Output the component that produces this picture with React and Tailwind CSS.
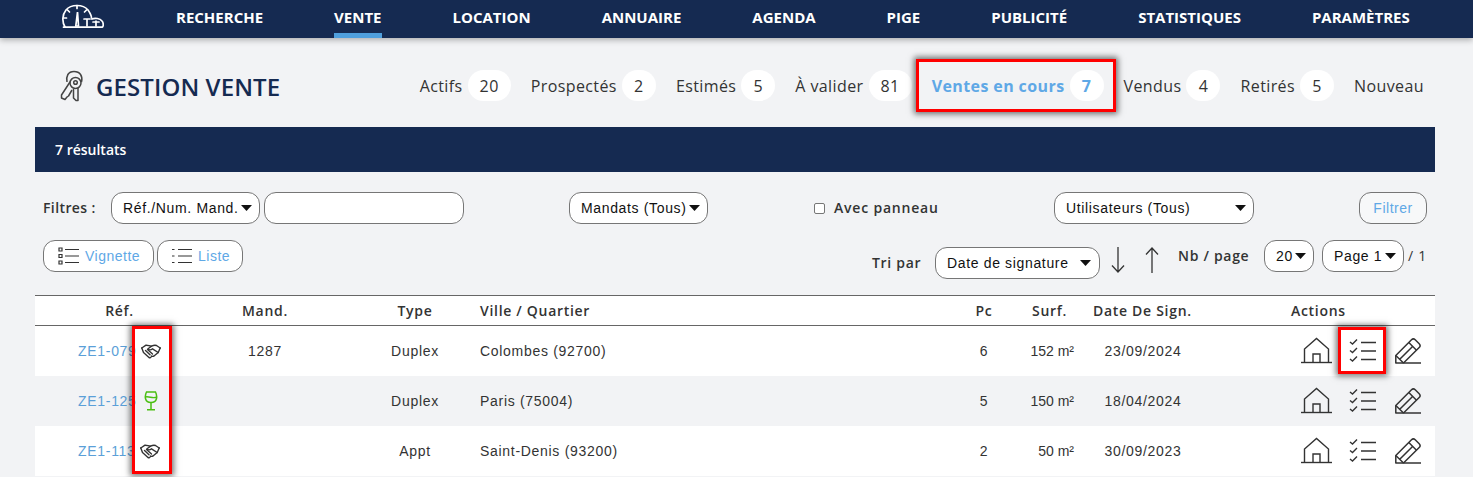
import React from "react";

const navItems = ["RECHERCHE", "VENTE", "LOCATION", "ANNUAIRE", "AGENDA", "PIGE", "PUBLICITÉ", "STATISTIQUES", "PARAMÈTRES"];

const tabs = [
  ["Actifs", "20"],
  ["Prospectés", "2"],
  ["Estimés", "5"],
  ["À valider", "81"],
  ["Ventes en cours", "7", true],
  ["Vendus", "4"],
  ["Retirés", "5"],
  ["Nouveau"],
];

const rows = [
  { ref: "ZE1-079", mand: "1287", type: "Duplex", city: "Colombes (92700)", pc: "6", surf: "152 m²", date: "23/09/2024", icon: "hand" },
  { ref: "ZE1-125", mand: "", type: "Duplex", city: "Paris (75004)", pc: "5", surf: "150 m²", date: "18/04/2024", icon: "wine", alt: true },
  { ref: "ZE1-113", mand: "", type: "Appt", city: "Saint-Denis (93200)", pc: "2", surf: "50 m²", date: "30/09/2023", icon: "hand" },
];

const Logo = () => (
  <svg width="42" height="24" viewBox="0 0 42 24" fill="none" stroke="#fff" strokeWidth="1.7" strokeLinecap="round">
    <path d="M3 23 C0 18 0 11 4 6 C9 0 21 0 26 6 C28 9 29.500 11 29.500 14" />
    <path d="M1.500 23.200 H40 C41.500 23.200 41.800 19 40 17 C38 14.500 33 13.500 30 15" />
    <path d="M15 1.500 V4.500 M5.500 6 L7.500 8 M24.500 6 L22.500 8 M1.500 14 H4.500 M15.500 8 L13.800 22 H16.500 Z" />
    <path d="M25 22 V16 M22 15 H28 M34 22 V17 M31 18 H37" />
  </svg>
);

const Keys = () => (
  <svg width="24" height="32" viewBox="0 0 24 32" fill="none" stroke="#444" strokeWidth="1.5" strokeLinejoin="round">
    <path d="M7 12 C6 6 8 1.500 14 1.500 C20 1.500 23 6 21.500 12" />
    <circle cx="15.500" cy="13" r="5.500" />
    <circle cx="15.500" cy="12.500" r="1.800" />
    <path d="M13.500 18.500 V28 L16 30.500 H18 V18" />
    <path d="M10 12 L1.500 25 V28 L5 29.500 L7 27 L8.500 26 L12 20" />
  </svg>
);

const House = () => (
  <svg width="31" height="28" viewBox="0 0 31 28" fill="none" stroke="#333" strokeWidth="1.4">
    <path d="M0 25.500 H31" />
    <path d="M3.500 25.500 V12 L15.500 1.500 L27.500 12 V25.500" />
    <path d="M12 25.500 V17 H19 V25.500" />
  </svg>
);

const Checks = () => (
  <svg width="27" height="26" viewBox="0 0 27 26" fill="none" stroke="#333" strokeWidth="1.4">
    <path d="M1 4 L3.500 6 L8 1.500 M1 12.500 L3.500 14.500 L8 10 M1 21 L3.500 23 L8 18.500" />
    <path d="M12 4.500 H27 M12 13 H27 M12 21.500 H27" />
  </svg>
);

const Pencil = () => (
  <svg width="26" height="26" viewBox="0 0 26 26" fill="none" stroke="#333" strokeWidth="1.5" strokeLinejoin="round">
    <path d="M0.800 25 V17.500 L16.500 1.800 C17.700 0.600 19 0.600 20.200 1.800 L24.200 5.800 C25.400 7 25.400 8.300 24.200 9.500 L8.500 25 Z" />
    <path d="M0.800 17.500 L8.500 25 M13.800 4.500 L21.500 12.200 M5 21 L17.800 8.200" />
    <path d="M8.500 25 H26" />
  </svg>
);

const Handshake = () => (
  <svg width="20" height="15" viewBox="0 0 20 15" fill="none" stroke="#333" strokeWidth="1.4" strokeLinecap="round" strokeLinejoin="round" className="shrink-0">
    <path d="M0.800 4 L5 1.200 C7 1 8.500 2.200 10.500 2.200 C12.500 1.200 14 1 15.500 1.500 L19.200 4" />
    <path d="M0.800 4 L2.500 8.500 L8 13.500 C9 14 10 13.500 10.500 12.500 M19.200 4 L17.200 8.500 L13 12 C12 12.500 11 12.500 10.500 12" />
    <path d="M10.500 2.200 L7 4.800 C8 6.500 10 6 11.500 4.800 L17.200 8.500" />
    <path d="M4.500 6.500 L9 10.800 M6.500 5.500 L11.500 10" />
  </svg>
);

const Wine = () => (
  <svg width="14" height="20" viewBox="0 0 14 20" fill="none" stroke="#4bbf12" strokeWidth="1.5">
    <path d="M2.500 1 H11.500 C13.500 5 13.500 11.500 7 11.500 C0.500 11.500 0.500 5 2.500 1 Z" />
    <path d="M1.500 6 C5 5 9 8 12.800 6" />
    <path d="M7 11.500 V18.500 M3 18.800 H11" />
  </svg>
);

const ListIcon = ({ boxes }) => (
  <svg width="21" height="18" viewBox="0 0 21 18" fill="none" stroke="#333" strokeWidth="1.2">
    {boxes ? (
      <path d="M1 1 H4 V4 H1 Z M1 7.500 H4 V10.500 H1 Z M1 14 H4 V17 H1 Z" />
    ) : (
      <path d="M1 2.500 H3.500 M1 9 H3.500 M1 15.500 H3.500" />
    )}
    <path d="M7 2.500 H21 M7 9 H21 M7 15.500 H21" />
  </svg>
);

const Caret = () => (
  <svg width="11" height="6" viewBox="0 0 11 6" className="shrink-0">
    <path d="M0 0 H11 L5.500 6 Z" fill="#111" />
  </svg>
);

const Arrow = ({ up }) => (
  <svg width="14" height="26" viewBox="0 0 14 26" fill="none" stroke="#333" strokeWidth="1.3" className={up ? "rotate-180" : ""}>
    <path d="M7 0 V25 M1 18.500 L7 25 L13 18.500" />
  </svg>
);

const Select = ({ label, className = "" }) => (
  <div className={`h-8 flex items-center justify-between rounded-xl border border-[#767676] bg-white font-['Liberation_Sans',sans-serif] text-[14px] text-[#111] tracking-[0.65px] whitespace-nowrap ${className}`}>
    <span>{label}</span>
    <Caret />
  </div>
);

const ViewButton = ({ label, boxes, className = "" }) => (
  <div className={`h-8 flex items-center gap-[6px] rounded-xl border border-[#767676] bg-white font-['Liberation_Sans',sans-serif] text-[14px] tracking-[0.5px] text-[#5fa8e6] ${className}`}>
    <ListIcon boxes={boxes} />
    {label}
  </div>
);

const RedBox = ({ className = "" }) => (
  <div className={`absolute border-[3px] border-[#ff0000] shadow-[0_0_6px_2px_rgba(0,0,0,0.55)] pointer-events-none ${className}`} />
);

const cols = "grid grid-cols-[169px_122px_154px_480px_48px_90px_90px_247px] items-center";

export default function App() {
  return (
    <div className="h-[477px] overflow-hidden bg-[#f2f3f5] font-['Open_Sans',sans-serif] text-[#333]">
      {/* top nav */}
      <header className="relative z-10 h-[38px] bg-[#152a51] shadow-[0_2px_6px_rgba(0,0,0,0.3)] flex">
        <div className="ml-[62px] mt-[4px] w-[114px] shrink-0">
          <Logo />
        </div>
        <nav className="flex gap-[71px]">
          {navItems.map((item) => (
            <div
              key={item}
              className={`h-[38px] pt-[7px] text-[15px] leading-[20px] font-bold text-white whitespace-nowrap ${item === "VENTE" ? "border-b-[5px] border-[#4f9fdc]" : ""}`}
            >
              {item}
            </div>
          ))}
        </nav>
      </header>

      {/* title + tabs */}
      <div className="h-[89px] flex items-center justify-between pt-[6px] pl-[60px] pr-[49px]">
        <div className="flex items-center gap-[12px]">
          <Keys />
          <h1 className="text-[24px] font-semibold tracking-[0.1px] text-[#152a51] pt-[3px] whitespace-nowrap">GESTION VENTE</h1>
        </div>
        <div className="flex items-center gap-[20px] text-[16px] tracking-[0.4px]">
          {tabs.map(([label, count, active]) => (
            <div key={label} className="relative flex items-center gap-[5px] whitespace-nowrap">
              <span className={active ? "font-bold text-[#5fa8e6]" : ""}>{label}</span>
              {count && (
                <span className={`h-[31px] min-w-[34px] px-3 flex items-center justify-center rounded-full bg-white ${active ? "font-bold text-[#5fa8e6]" : ""}`}>
                  {count}
                </span>
              )}
              {active && <RedBox className="-left-[16px] -right-[12px] -top-[11px] h-[53px]" />}
            </div>
          ))}
        </div>
      </div>

      <div className="ml-[35px] w-[1400px]">
        {/* result bar */}
        <div className="h-[45px] bg-[#152a51] flex items-center pl-[20px] text-[14px] font-semibold text-white">
          7 résultats
        </div>

        {/* filters */}
        <div className="flex items-center h-[32px] mt-[20px] pl-[8px]">
          <span className="w-[68px] mb-[2px] text-[14px] font-semibold tracking-[0.4px]">Filtres :</span>
          <Select label="Réf./Num. Mand." className="w-[149px] pl-[11px] pr-[7px]" />
          <div className="w-[200px] h-8 ml-1 rounded-xl border border-[#767676] bg-white" />
          <Select label="Mandats (Tous)" className="w-[139px] ml-[105px] pl-[11px] pr-[7px]" />
          <div className="w-[11px] h-[11px] ml-[106px] border border-[#767676] bg-white rounded-[2px]" />
          <span className="ml-[9px] mb-[2px] w-[105px] text-[14px] font-semibold tracking-[0.8px] whitespace-nowrap">Avec panneau</span>
          <Select label="Utilisateurs (Tous)" className="w-[200px] ml-[115px] pl-[11px] pr-[7px]" />
          <div className="w-[68px] h-8 ml-[105px] flex items-center justify-center rounded-xl border border-[#767676] bg-white/40 font-['Liberation_Sans',sans-serif] text-[14px] tracking-[0.5px] text-[#5fa8e6]">
            Filtrer
          </div>
        </div>

        <div className="flex items-start h-[55px] mt-[16px] pl-[8px]">
          <ViewButton label="Vignette" boxes className="w-[111px] pl-[14px]" />
          <ViewButton label="Liste" className="w-[86px] ml-[3px] pl-[13px]" />
          <span className="ml-[629px] mt-[12px] w-[48px] text-[14px] font-semibold tracking-[0.7px] whitespace-nowrap">Tri par</span>
          <Select label="Date de signature" className="w-[165px] ml-[15px] mt-[7px] pl-[11px] pr-[8px]" />
          <div className="ml-[11px] mt-[7px]"><Arrow /></div>
          <div className="ml-[20px] mt-[7px]"><Arrow up /></div>
          <span className="ml-[19px] mt-[5px] w-[72px] text-[14px] font-semibold tracking-[0.7px] whitespace-nowrap">Nb / page</span>
          <Select label="20" className="w-[50px] ml-[14px] pl-[11px] pr-[7px]" />
          <Select label="Page 1" className="w-[82px] ml-[8px] pl-[11px] pr-[7px]" />
          <span className="ml-[4px] mt-[5px] text-[14px] tracking-[0.7px] whitespace-nowrap">/ 1</span>
        </div>

        {/* table */}
        <div className="relative bg-white">
          <div className={`${cols} h-[31px] border-y border-[#666] text-[14px] font-semibold tracking-[0.7px]`}>
            <div className="text-center">Réf.</div>
            <div className="text-center">Mand.</div>
            <div className="pl-[24px] text-center">Type</div>
            <div>Ville / Quartier</div>
            <div className="text-center">Pc</div>
            <div className="pl-[24px]">Surf.</div>
            <div className="-ml-[5px] whitespace-nowrap">Date De Sign.</div>
            <div className="pl-[103px]">Actions</div>
          </div>

          {rows.map((r) => (
            <div
              key={r.ref}
              className={`${cols} h-[50px] font-['Liberation_Sans',sans-serif] text-[14px] tracking-[0.7px] ${r.alt ? "bg-[#f2f3f5]" : "bg-white"}`}
            >
              <div className="flex items-center pl-[43px] gap-[4px]">
                <span className="text-[#5b9fd8]">{r.ref}</span>
                {r.icon === "hand" ? (
                  <Handshake />
                ) : (
                  <span className="pl-[3px]"><Wine /></span>
                )}
              </div>
              <div className="text-center">{r.mand}</div>
              <div className="pl-[24px] text-center">{r.type}</div>
              <div>{r.city}</div>
              <div className="text-center">{r.pc}</div>
              <div className="text-right pr-[24px] tracking-normal">{r.surf}</div>
              <div className="text-center">{r.date}</div>
              <div className="flex items-center pl-[113px]">
                <House />
                <div className="ml-[17px]"><Checks /></div>
                <div className="ml-[19px]"><Pencil /></div>
              </div>
            </div>
          ))}

          {/* annotation boxes */}
          <RedBox className="left-[97px] top-[31px] w-[40px] h-[148px]" />
          <RedBox className="left-[1303px] top-[32px] w-[48px] h-[47px]" />
        </div>
      </div>
    </div>
  );
}
